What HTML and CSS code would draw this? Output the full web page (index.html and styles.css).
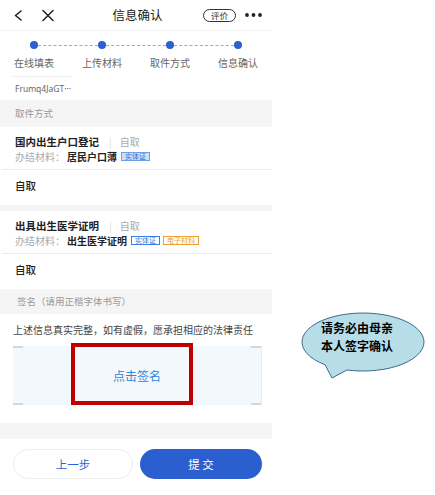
FILE: index.html
```html
<!DOCTYPE html>
<html lang="zh-CN">
<head>
  <meta charset="UTF-8" />
  <meta name="viewport" content="width=device-width, initial-scale=1.0"/>
  <title>信息确认</title>
  <link rel="stylesheet" href="styles.css">
</head>
<body>
  <div class="page">
    <div class="phone">
      <header class="topbar">
        <svg class="nav-icons" width="42" height="30" viewBox="0 0 42 30">
          <path d="M8 11 L2.5 15.5 L8 20" fill="none" stroke="#222" stroke-width="1.6" stroke-linecap="round" stroke-linejoin="round"/>
          <path d="M30 10.5 L40 20.5 M40 10.5 L30 20.5" fill="none" stroke="#222" stroke-width="1.5" stroke-linecap="round"/>
        </svg>
        <div class="title">信息确认</div>
        <div class="topbar-right">
          <span class="rate">评价</span>
          <svg width="17" height="6" viewBox="0 0 17 6">
            <circle cx="2" cy="3" r="1.9" fill="#222"/>
            <circle cx="8.5" cy="3" r="1.9" fill="#222"/>
            <circle cx="15" cy="3" r="1.9" fill="#222"/>
          </svg>
        </div>
      </header>

      <div class="steps">
        <div class="track">
          <i class="dot"></i><i class="dash"></i>
          <i class="dot"></i><i class="dash"></i>
          <i class="dot"></i><i class="dash"></i>
          <i class="dot"></i>
        </div>
        <div class="step-labels">
          <span>在线填表</span>
          <span>上传材料</span>
          <span>取件方式</span>
          <span>信息确认</span>
        </div>
        <div class="tab-line"></div>
        <div class="app-id">Frumq4JaGT···</div>
      </div>

      <div class="band">取件方式</div>

      <div class="item">
        <div class="item-title">国内出生户口登记<span class="sep">|</span><span class="mode">自取</span></div>
        <div class="material">
          <span class="label">办结材料：</span><b>居民户口薄</b>
          <span class="tag tag-filled">实体证</span>
        </div>
        <div class="pickup">自取</div>
      </div>
      <div class="divider"></div>

      <div class="item">
        <div class="item-title">出具出生医学证明<span class="sep">|</span><span class="mode">自取</span></div>
        <div class="material">
          <span class="label">办结材料：</span><b>出生医学证明</b>
          <span class="tag tag-blue">实体证</span><span class="tag tag-orange">电子材料</span>
        </div>
        <div class="pickup">自取</div>
      </div>

      <div class="band band-sign">签名（请用正楷字体书写）</div>
      <p class="pledge">上述信息真实完整，如有虚假，愿承担相应的法律责任</p>
      <div class="sign-pad">
        点击签名
        <span class="highlight"></span>
      </div>
      <div class="band band-empty"></div>

      <div class="actions">
        <button class="btn-prev">上一步</button>
        <button class="btn-submit">提 交</button>
      </div>
    </div>

    <div class="aside">
      <div class="bubble">
        <svg width="140" height="75" viewBox="0 0 140 75">
          <path d="M30 54.7 A61 29 0 1 1 52 60 L37 68 Z" fill="#b7dee8" stroke="#3e6a8e" stroke-width="1"/>
        </svg>
        <p>请务必由母亲<br>本人签字确认</p>
      </div>
    </div>
  </div>
</body>
</html>
```

FILE: styles.css
```css
body {
  margin: 0;
  background: #fff;
  font-family: "Noto Sans CJK SC", "Noto Sans", sans-serif;
  color: #222;
}

.page {
  display: flex;
  width: 435px;
  height: 495px;
  overflow: hidden;
}

.phone {
  width: 272px;
  flex: none;
}

/* 顶部导航 */
.topbar {
  height: 30px;
  display: grid;
  grid-template-columns: 1fr auto 1fr;
  align-items: center;
  padding: 0 10px 0 13px;
  border-bottom: 1px solid #f2f2f2;
}

.nav-icons {
  display: block;
}

.title {
  font-size: 12.5px;
  line-height: 30px;
  color: #222;
}

.topbar-right {
  display: flex;
  align-items: center;
  justify-content: flex-end;
  gap: 9px;
}

.rate {
  box-sizing: border-box;
  width: 33px;
  height: 13px;
  border: 1px solid #333;
  border-radius: 7px;
  font-size: 8.5px;
  line-height: 11px;
  text-align: center;
  color: #333;
}

.topbar-right svg {
  display: block;
}

/* 步骤条 */
.steps {
  padding-top: 10px;
}

.track {
  display: flex;
  align-items: center;
  height: 8px;
  padding: 0 30px;
}

.dot {
  width: 8px;
  height: 8px;
  border-radius: 50%;
  background: #2d5fd0;
  flex: none;
}

.dash {
  flex: 1;
  border-top: 1px dashed #8fa9e3;
}

.step-labels {
  display: grid;
  grid-template-columns: repeat(4, 1fr);
  margin-top: 7px;
  font-size: 10px;
  line-height: 14px;
  color: #666;
  text-align: center;
}

.tab-line {
  width: 59px;
  height: 1px;
  margin: 6px 0 0 13px;
  background: #ececec;
}

.app-id {
  padding-left: 15px;
  margin-top: 6px;
  font-family: "Noto Sans", sans-serif;
  font-size: 8.5px;
  line-height: 12px;
  color: #666;
}

/* 灰色分组栏 */
.band {
  margin-top: 5px;
  height: 27px;
  padding-left: 15px;
  background: #f5f5f5;
  font-size: 9.5px;
  line-height: 27px;
  color: #999;
}

.band-sign {
  margin-top: 0;
  height: 25px;
  line-height: 25px;
  padding-left: 17px;
}

.band-empty {
  margin-top: 18px;
  height: 16px;
}

/* 取件事项 */
.item {
  padding-top: 7px;
}

.item-title {
  padding-left: 15px;
  font-size: 10.5px;
  line-height: 15px;
  font-weight: bold;
  color: #222;
}

.sep {
  margin: 0 8px 0 10px;
  font-weight: normal;
  color: #ddd;
}

.mode {
  font-weight: normal;
  color: #aaa;
  font-size: 10px;
}

.material {
  display: flex;
  align-items: center;
  padding-bottom: 5px;
  font-size: 10px;
  line-height: 15px;
  border-bottom: 1px solid #ececec;
  margin-left: 2px;
  padding-left: 13px;
}

.material .label {
  color: #aaa;
}

.material b {
  margin-left: 2px;
  color: #222;
}

.tag {
  box-sizing: border-box;
  height: 9px;
  padding: 0 3px;
  margin-left: 4px;
  font-size: 7px;
  line-height: 7px;
  border: 1px solid;
}

.tag + .tag {
  margin-left: 3px;
}

.tag-filled {
  color: #2f6fd6;
  border-color: #6f9de6;
  background: #cddff9;
}

.tag-blue {
  color: #3b7de0;
  border-color: #3b7de0;
}

.tag-orange {
  color: #f0a030;
  border-color: #f0a030;
}

.pickup {
  padding: 8px 15px 11px;
  font-size: 10.5px;
  line-height: 16px;
  font-weight: 500;
  color: #222;
}

.divider {
  height: 6px;
  background: #f5f5f5;
}

/* 签名 */
.pledge {
  margin: 0;
  padding: 9px 0 0 13px;
  font-size: 10px;
  line-height: 14px;
  color: #444;
  white-space: nowrap;
}

.sign-pad {
  position: relative;
  height: 59px;
  margin: 9px 10px 0 13px;
  background-color: #f3f8fd;
  background-image:
    linear-gradient(#d4d8de, #d4d8de),
    linear-gradient(#d4d8de, #d4d8de),
    linear-gradient(#d4d8de, #d4d8de),
    linear-gradient(#d4d8de, #d4d8de);
  background-size: 10px 2px;
  background-repeat: no-repeat;
  background-position: left top, right top, left bottom, right bottom;
  border-right: 1px solid #e4ecf6;
  font-size: 12px;
  line-height: 59px;
  text-align: center;
  color: #2f86d8;
}

.highlight {
  position: absolute;
  left: 58px;
  top: -3px;
  width: 122px;
  height: 62px;
  box-sizing: border-box;
  border: 4px solid #c00000;
}

/* 底部按钮 */
.actions {
  display: grid;
  grid-template-columns: 120px 122px;
  gap: 7px;
  padding: 10px 0 0 13px;
}

.actions button {
  height: 30px;
  border-radius: 15px;
  font-family: inherit;
  font-size: 11.5px;
  cursor: pointer;
}

.btn-prev {
  border: 1px solid #eeeeee;
  background: #fff;
  color: #2a64cf;
}

.btn-submit {
  border: none;
  background: #2b5fcf;
  color: #fff;
  font-size: 11px;
}

/* 提示气泡 */
.aside {
  flex: 1;
  padding: 310px 0 0 23px;
}

.bubble {
  position: relative;
  width: 140px;
  height: 75px;
}

.bubble svg {
  display: block;
}

.bubble p {
  position: absolute;
  left: 22px;
  top: 9px;
  width: 80px;
  margin: 0;
  font-size: 12px;
  line-height: 17.5px;
  font-weight: bold;
  color: #000;
  text-align: center;
}
```
